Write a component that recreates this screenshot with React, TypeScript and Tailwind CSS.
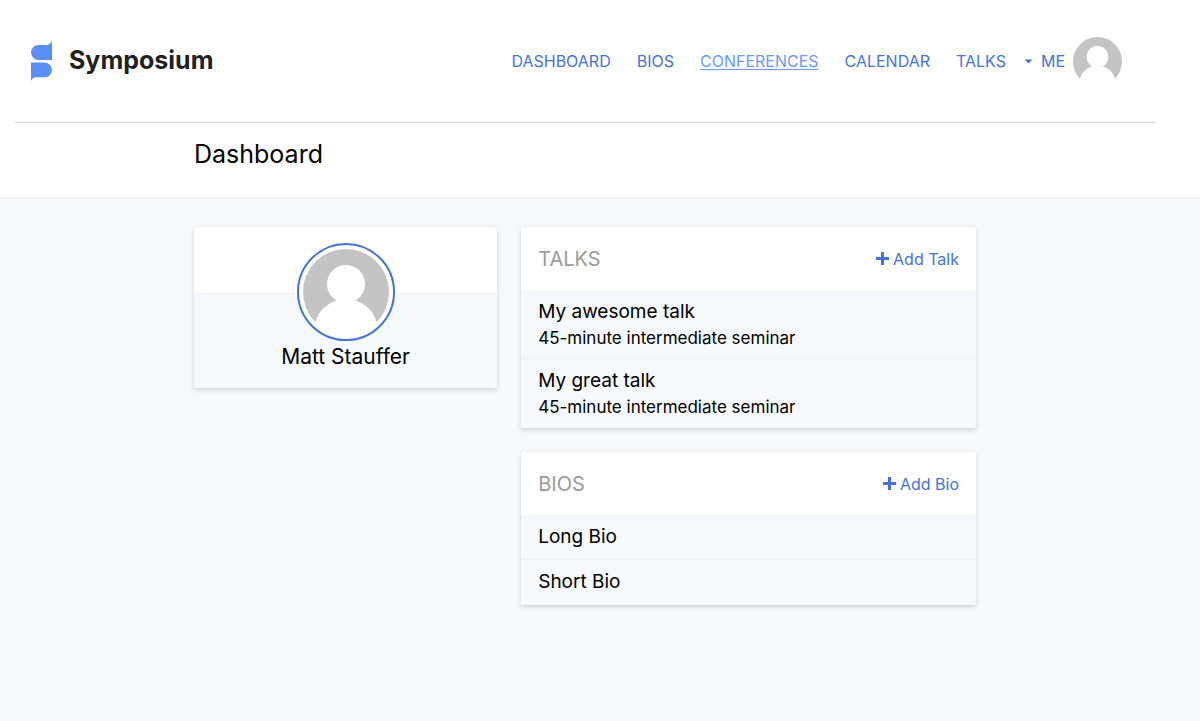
import React from "react";

type Item = { title: string; detail?: string };

const navLinks = ["Dashboard", "Bios", "Conferences", "Calendar", "Talks"];

const talks: Item[] = [
  { title: "My awesome talk", detail: "45-minute intermediate seminar" },
  { title: "My great talk", detail: "45-minute intermediate seminar" },
];

const bios: Item[] = [{ title: "Long Bio" }, { title: "Short Bio" }];

function Logo() {
  return (
    <svg viewBox="0 0 21 40" className="h-10 w-[21px]" fill="#5a8ff5" aria-hidden="true">
      <path d="M21 0V19H7.5A7.5 7.5 0 0 1 7.5 4H15.5C18 4 20 2 21 0Z" />
      <path d="M0 40V21.5H13.5A7.4 7.4 0 0 1 13.5 36.3H5C2.8 36.3 1 38 0 40Z" />
    </svg>
  );
}

function Avatar({ className }: { className: string }) {
  const clipId = React.useId();
  return (
    <svg viewBox="0 0 86 86" className={className} role="img" aria-label="Profile picture">
      <defs>
        <clipPath id={clipId}>
          <circle cx="43" cy="43" r="43" />
        </clipPath>
      </defs>
      <g clipPath={`url(#${clipId})`}>
        <rect width="86" height="73" fill="#c4c4c4" />
        <circle cx="43" cy="35" r="19" fill="#fff" />
        <circle cx="43" cy="82" r="32" fill="#fff" />
      </g>
    </svg>
  );
}

function Plus() {
  return (
    <svg viewBox="0 0 13 13" className="size-[13px]" fill="currentColor" aria-hidden="true">
      <path d="M5 0h3v5h5v3h-5v5h-3v-5h-5v-3h5z" />
    </svg>
  );
}

function Panel({ title, action, items }: { title: string; action: string; items: Item[] }) {
  return (
    <section className="rounded-t bg-white shadow-[0_2px_5px_rgba(0,0,0,0.16)]">
      <div className="flex h-[63px] items-center justify-between px-[17px]">
        <h2 className="text-xl text-[#9b9b9b] uppercase">{title}</h2>
        <a href="#" className="flex items-center gap-1 text-base text-[#4673d9]">
          <Plus />
          {action}
        </a>
      </div>
      <ul className="bg-[#f5f9fc]">
        {items.map((item) => (
          <li key={item.title} className="border-b border-[#edf1f4] px-[17px] py-2 last:border-transparent">
            <h3 className="text-[19px] leading-7">{item.title}</h3>
            {item.detail && <p className="text-[17px] leading-6">{item.detail}</p>}
          </li>
        ))}
      </ul>
    </section>
  );
}

export default function App() {
  return (
    <div className="min-h-screen bg-[#f5f9fc] font-['Inter',sans-serif] text-black">
      <div className="border-b border-[#edf1f4] bg-white">
        <div className="max-w-[1170px] px-[15px]">
          <header className="flex h-[123px] items-center justify-between border-b border-[#d6d6d6] pr-[33px] pl-4">
            <a href="#" className="flex items-center gap-[17px]">
              <Logo />
              <span className="pb-[2px] text-[25px] leading-8 font-bold text-[#231f20]">Symposium</span>
            </a>
            <nav className="flex items-center gap-[26px] text-base text-[#4673d9] uppercase">
              {navLinks.map((label) => (
                <a
                  key={label}
                  href="#"
                  className={label === "Conferences" ? "text-[#6b9bf8] underline underline-offset-2" : ""}
                >
                  {label}
                </a>
              ))}
              <button type="button" className="-ml-2 flex items-center gap-2 uppercase">
                <svg viewBox="0 0 9 5" className="h-[5px] w-[9px]" fill="currentColor" aria-hidden="true">
                  <path d="M0.5 0.5h8l-4 4z" />
                </svg>
                Me
                <Avatar className="size-[49px]" />
              </button>
            </nav>
          </header>
        </div>
        <div className="max-w-[1170px]">
          <h1 className="mx-auto max-w-[782px] pt-[15px] pb-[27px] text-[25px] leading-8">Dashboard</h1>
        </div>
      </div>

      <div className="max-w-[1170px] pt-[29px]">
        <main className="mx-auto grid max-w-[782px] grid-cols-[2fr_3fr] items-start gap-6">
          <section className="flex flex-col items-center rounded-t bg-[linear-gradient(#fff_65px,#f5f9fc_65px)] pt-4 pb-4 shadow-[0_2px_5px_rgba(0,0,0,0.16)]">
            <div className="rounded-full border-2 border-[#4673d9] bg-white p-1">
              <Avatar className="size-[86px]" />
            </div>
            <h2 className="text-[21px] leading-[31px]">Matt Stauffer</h2>
          </section>
          <div className="flex flex-col gap-6">
            <Panel title="Talks" action="Add Talk" items={talks} />
            <Panel title="Bios" action="Add Bio" items={bios} />
          </div>
        </main>
      </div>
    </div>
  );
}
